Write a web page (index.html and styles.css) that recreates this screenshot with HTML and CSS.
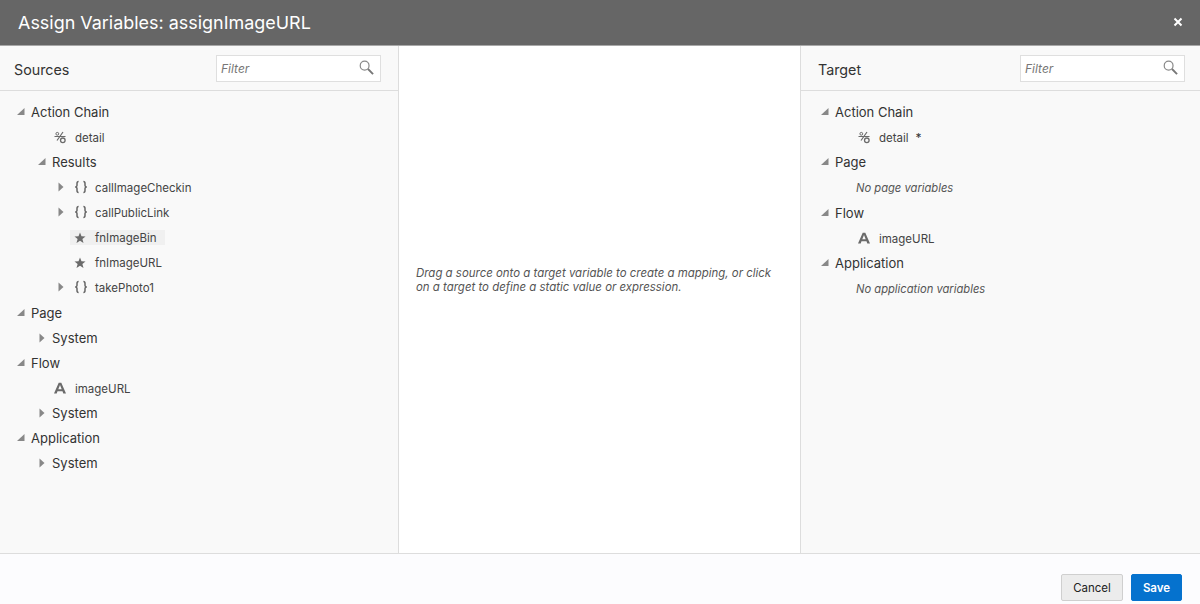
FILE: index.html
```html
<!DOCTYPE html>
<html lang="en">
<head>
<meta charset="utf-8">
<title>Assign Variables</title>
<link rel="stylesheet" href="styles.css">
</head>
<body>
<svg class="defs" width="0" height="0" aria-hidden="true">
  <symbol id="open" viewBox="0 0 10 10"><path d="M8.500 1V8H1Z"/></symbol>
  <symbol id="closed" viewBox="0 0 10 10"><path d="M2.500 .5L7.500 5L2.500 9.500Z"/></symbol>
  <symbol id="obj" viewBox="0 0 14 14"><path d="M4.600 1.500C3 1.500 3 2.300 3 3.500V5.600C3 6.500 2.500 7 1.200 7C2.500 7 3 7.500 3 8.400V10.500C3 11.700 3 12.500 4.600 12.500M9.400 1.500C11 1.500 11 2.300 11 3.500V5.600C11 6.500 11.500 7 12.800 7C11.500 7 11 7.500 11 8.400V10.500C11 11.700 11 12.500 9.400 12.500" fill="none" stroke="#666" stroke-width="1.500"/></symbol>
  <symbol id="star" viewBox="0 0 14 14"><path d="M7 2.500L8.500 6.200L12.500 6.400L9.400 8.900L10.500 13L7 10.700L3.500 13L4.600 8.900L1.500 6.400L5.500 6.200Z" fill="#6b6b6b"/></symbol>
  <symbol id="letter" viewBox="0 0 14 14"><path d="M5.700 1.800H8.300L13 12.500H10.300L9.500 10.300H4.500L3.700 12.500H1ZM5.300 8.200H8.700L7 3.900Z" fill="#6b6b6b" fill-rule="evenodd"/></symbol>
  <symbol id="mixed" viewBox="0 0 14 14"><g fill="none" stroke="#6b6b6b"><path d="M1.500 6.500H12.500M10 2L4 10.500" stroke-width="1.200"/><circle cx="4.300" cy="3.800" r="1.400" stroke-width="1"/><circle cx="9.800" cy="10.300" r="2.300" stroke-width="1.300"/></g></symbol>
  <symbol id="search" viewBox="0 0 16 16"><circle cx="6" cy="6" r="4.700" fill="none" stroke="#8a8a8a" stroke-width="1.300"/><path d="M9.600 9.600L15 15" stroke="#777" stroke-width="2"/></symbol>
</svg>
<div class="dialog">
  <header class="titlebar">
    <h1>Assign Variables: assignImageURL</h1>
    <svg class="close" viewBox="0 0 10 10"><path d="M1.500 1.500L8.500 8.500M8.500 1.500L1.500 8.500" stroke="#fff" stroke-width="2"/></svg>
  </header>
  <main class="panes">
    <section class="pane pane-source">
      <div class="pane-head">
        <h2>Sources</h2>
        <div class="filter"><span>Filter</span><svg><use href="#search"/></svg></div>
      </div>
      <ul class="tree">
        <li class="row d0"><svg class="tw"><use href="#open"/></svg><span class="lab">Action Chain</span></li>
        <li class="row d1 leaf"><svg class="ic"><use href="#mixed"/></svg><span class="var">detail</span></li>
        <li class="row d1b"><svg class="tw"><use href="#open"/></svg><span class="lab">Results</span></li>
        <li class="row d2"><svg class="tw"><use href="#closed"/></svg><svg class="ic"><use href="#obj"/></svg><span class="var">callImageCheckin</span></li>
        <li class="row d2"><svg class="tw"><use href="#closed"/></svg><svg class="ic"><use href="#obj"/></svg><span class="var">callPublicLink</span></li>
        <li class="row nochild"><span class="hl"><svg class="ic"><use href="#star"/></svg><span class="var">fnImageBin</span></span></li>
        <li class="row nochild"><svg class="ic"><use href="#star"/></svg><span class="var">fnImageURL</span></li>
        <li class="row d2"><svg class="tw"><use href="#closed"/></svg><svg class="ic"><use href="#obj"/></svg><span class="var">takePhoto1</span></li>
        <li class="row d0"><svg class="tw"><use href="#open"/></svg><span class="lab">Page</span></li>
        <li class="row d1b"><svg class="tw"><use href="#closed"/></svg><span class="lab">System</span></li>
        <li class="row d0"><svg class="tw"><use href="#open"/></svg><span class="lab">Flow</span></li>
        <li class="row d1 leaf"><svg class="ic"><use href="#letter"/></svg><span class="var">imageURL</span></li>
        <li class="row d1b"><svg class="tw"><use href="#closed"/></svg><span class="lab">System</span></li>
        <li class="row d0"><svg class="tw"><use href="#open"/></svg><span class="lab">Application</span></li>
        <li class="row d1b"><svg class="tw"><use href="#closed"/></svg><span class="lab">System</span></li>
      </ul>
    </section>
    <section class="pane-mid">
      <p>Drag a source onto a target variable to create a mapping, or click on a target to define a static value or expression.</p>
    </section>
    <section class="pane pane-target">
      <div class="pane-head">
        <h2>Target</h2>
        <div class="filter"><span>Filter</span><svg><use href="#search"/></svg></div>
      </div>
      <ul class="tree">
        <li class="row d0"><svg class="tw"><use href="#open"/></svg><span class="lab">Action Chain</span></li>
        <li class="row d1 leaf"><svg class="ic"><use href="#mixed"/></svg><span class="var">detail</span><span class="mark">*</span></li>
        <li class="row d0"><svg class="tw"><use href="#open"/></svg><span class="lab">Page</span></li>
        <li class="row empty"><span class="var-note">No page variables</span></li>
        <li class="row d0"><svg class="tw"><use href="#open"/></svg><span class="lab">Flow</span></li>
        <li class="row d1 leaf"><svg class="ic"><use href="#letter"/></svg><span class="var">imageURL</span></li>
        <li class="row d0"><svg class="tw"><use href="#open"/></svg><span class="lab">Application</span></li>
        <li class="row empty"><span class="var-note">No application variables</span></li>
      </ul>
    </section>
  </main>
  <footer class="actions">
    <button class="btn btn-cancel">Cancel</button>
    <button class="btn btn-save">Save</button>
  </footer>
</div>
</body>
</html>
```
FILE: styles.css
```css
* { box-sizing: border-box; }
html, body { margin: 0; height: 100%; }
body { font-family: Inter, "Liberation Sans", sans-serif; color: #333; background: #fff; overflow: hidden; }
.defs { display: block; height: 0; }
.dialog { display: flex; flex-direction: column; width: 1200px; height: 604px; }
.titlebar { height: 46px; flex: none; display: flex; align-items: center; justify-content: space-between; padding: 0 17px 1px 18px; background: #666; border-bottom: 1px solid #a8a8a8; }
.titlebar h1 { margin: 0; font-size: 17.950px; font-weight: 400; color: #fff; }
.close { width: 10px; height: 10px; }
.panes { height: 507px; flex: none; display: flex; }
.pane { background: #f9f9f9; display: flex; flex-direction: column; }
.pane-source { width: 399px; border-right: 1px solid #ddd; }
.pane-target { width: 400px; border-left: 1px solid #ddd; }
.pane-mid { flex: 1; background: #fff; padding: 221px 16px 0 17px; }
.pane-mid p { margin: 0; font-size: 11.450px; line-height: 13.500px; font-style: italic; color: #555; }
.pane-head { height: 45px; flex: none; display: flex; align-items: center; justify-content: space-between; padding: 0 17px 0 14px; border-bottom: 1px solid #ddd; }
.pane-target .pane-head { padding-left: 17px; padding-right: 15px; }
.pane-head h2 { margin: 0; padding-top: 2px; font-size: 14.300px; font-weight: 400; color: #333; }
.filter { width: 165px; height: 27px; display: flex; align-items: center; justify-content: space-between; padding: 0 6px 0 4px; background: #fff; border: 1px solid #dfdfdf; font-size: 12px; font-style: italic; color: #777; }
.filter svg { width: 15px; height: 15px; margin-bottom: 2px; }
.tree { list-style: none; margin: 0; padding: 8.500px 0 0; }
.row { height: 25.070px; display: flex; align-items: center; font-size: 12px; }
.pane-target .row { height: 25.130px; }
.lab { font-size: 13px; color: #333; }
.var { padding-top: 2px; font-size: 11.500px; color: #444; }
.var-note { padding-top: 2px; }
.tw { width: 10px; height: 10px; flex: none; fill: #888; margin-right: 5px; }
.d0 { padding-left: 16px; }
.pane-target .d0, .pane-target .d1 { margin-left: 3px; }
.d1b { padding-left: 37px; }
.d1 { padding-left: 53px; }
.d2 { padding-left: 56px; }
.nochild { padding-left: 73px; }
.ic { width: 14px; height: 14px; flex: none; margin-right: 8px; }
.d2 .ic { margin: 0 7px 0 3px; }
.hl { display: flex; align-items: center; height: 15px; margin-left: -3px; padding-left: 3px; width: 95px; background: #f0f0f0; }
.mark { margin-left: 7px; font-size: 12px; }
.empty { padding-left: 55px; font-style: italic; font-size: 11.200px; color: #555; }
.actions { flex: 1; display: flex; justify-content: flex-end; align-items: flex-start; gap: 8px; padding: 20px 18px 0 0; background: #fcfcfe; border-top: 1px solid #ddd; }
.btn { height: 27px; font: 400 11.500px Inter, "Liberation Sans", sans-serif; border-radius: 2px; padding: 0; }
.btn-cancel { width: 62px; background: #ececec; color: #222; border: 1px solid #cfcfcf; }
.btn-save { width: 51px; background: #0572ce; color: #fff; border: 1px solid #0572ce; font-weight: 600; }
```
